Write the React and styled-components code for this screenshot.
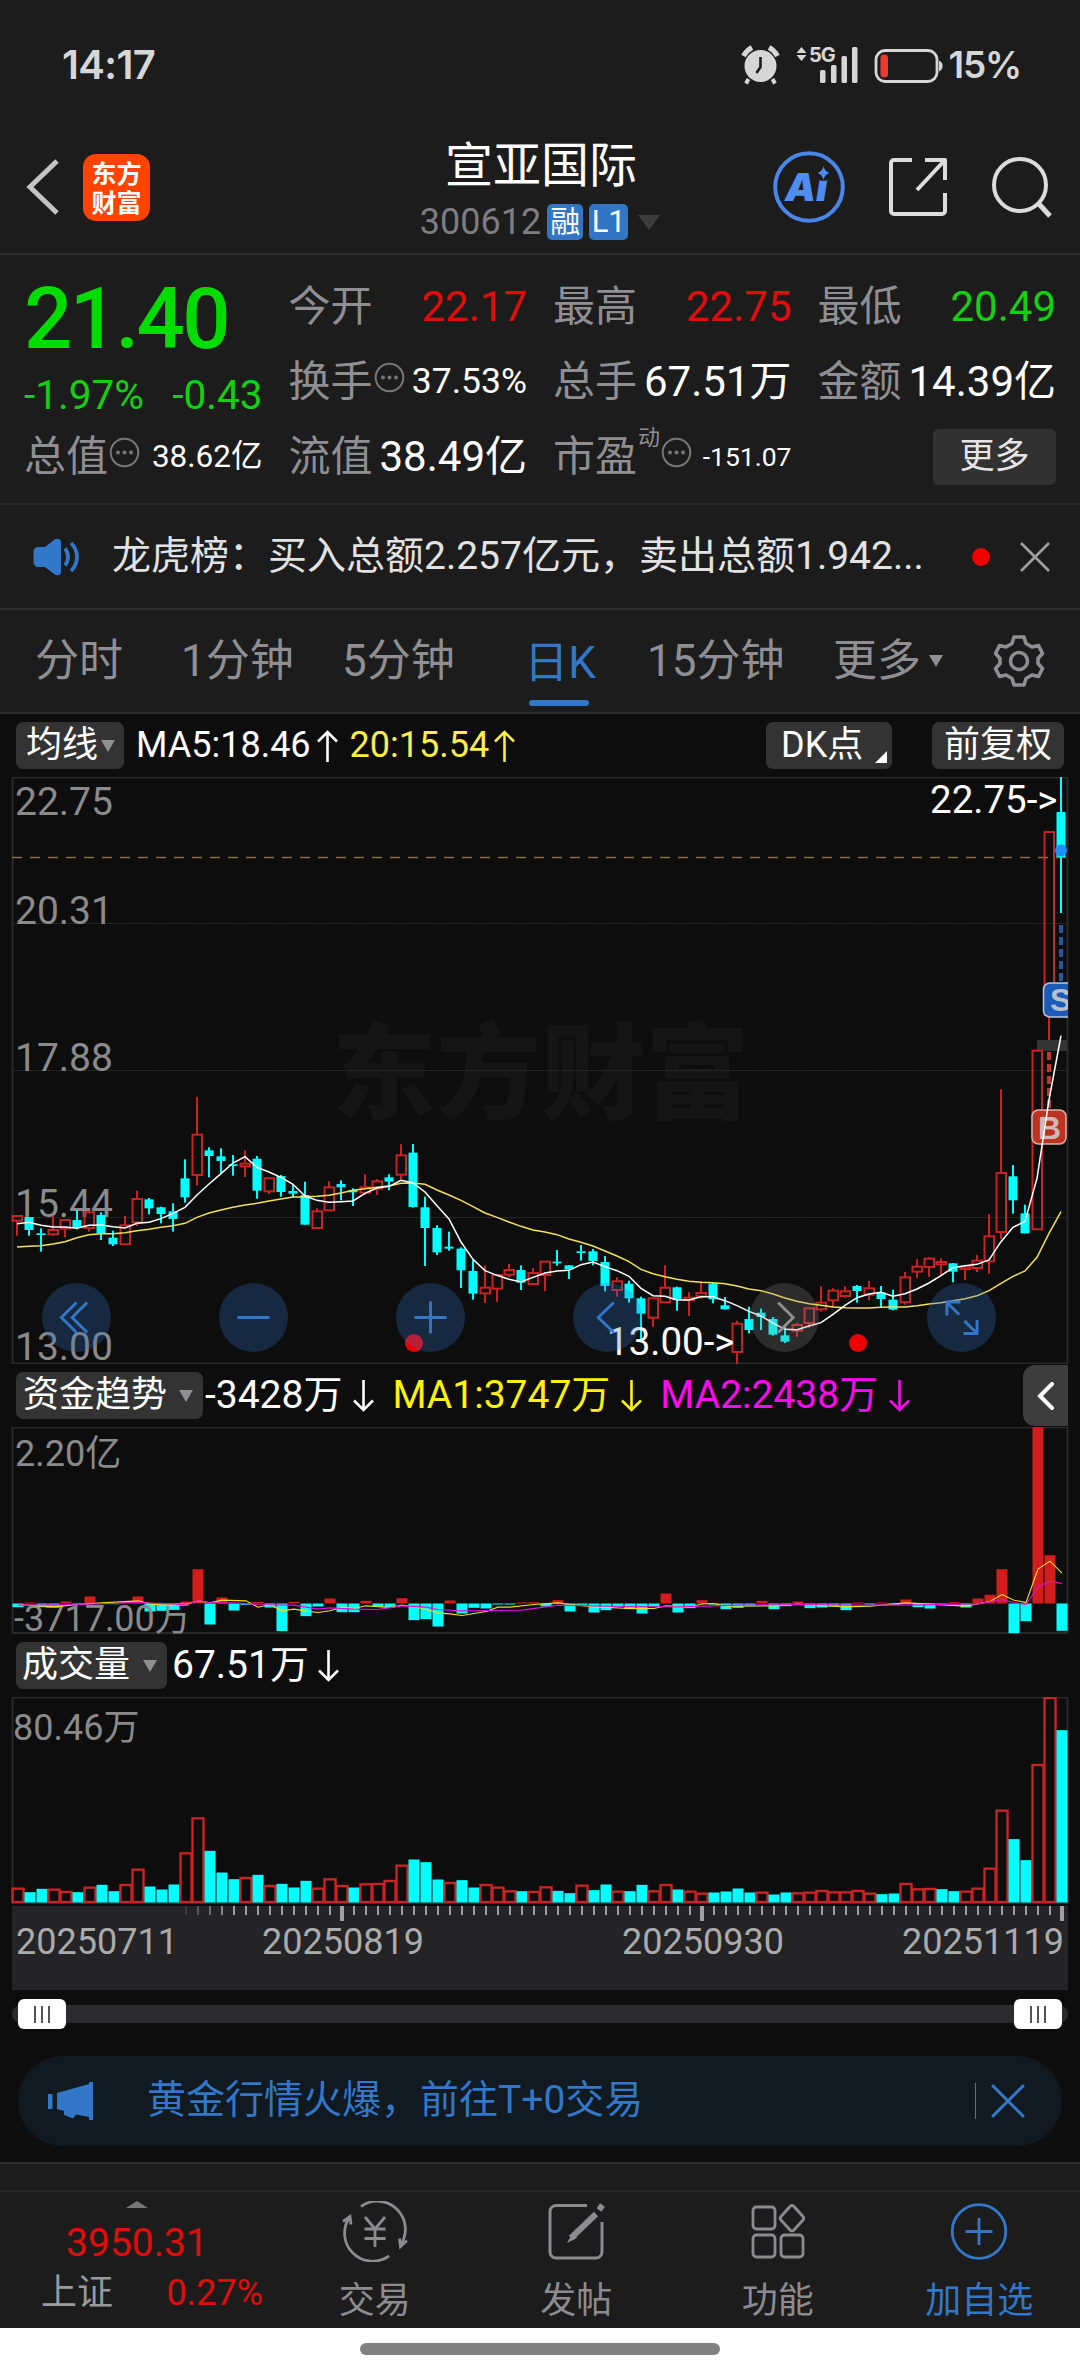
import React from "react"
import styled, { createGlobalStyle } from "styled-components"

const GlobalStyle = createGlobalStyle`
  * {
    box-sizing: border-box;
  }

  body {
    margin: 0;
    background: #0d0d0d;
    color: #fff;
    font-family: Roboto, "Noto Sans CJK SC", sans-serif;
    -webkit-font-smoothing: antialiased;
  }

  svg {
    display: block;
    flex: none;
  }
`

const clr = {
  bar: "#1c1c1c",
  line: "#2f2f2f",
  muted: "#8f8f93",
  blue: "#3277c8",
  red: "#e20c0c",
  green: "#14cf14",
  up: "#c62424",
  down: "#00ffff",
  frame: "#29292a",
}

const Page = styled.div`
  width: 1080px;
  height: 2376px;
  overflow: hidden;
  display: flex;
  flex-direction: column;
`

/* ---------- status bar ---------- */

const StatusBar = styled.div`
  display: flex;
  justify-content: space-between;
  height: 130px;
  padding: 0 59px 0 62px;
  background: ${clr.bar};
  color: #d6d6d6;
  font-family: Inter, Roboto, sans-serif;
  font-weight: 600;
  line-height: 130px;
`

const Clock = styled.span`
  font-size: 40px;
  letter-spacing: -0.6px;
`

const StatusIcons = styled.div`
  display: flex;
  align-items: center;
`

const Battery = styled.span`
  margin-left: 6px;
  font-size: 37px;
  letter-spacing: -1.2px;
`

/* ---------- header ---------- */

const Header = styled.header`
  display: grid;
  grid-template-columns: 340px 1fr 340px;
  height: 125px;
  background: ${clr.bar};
  border-bottom: 2px solid ${clr.line};
`

const HeaderLeft = styled.div`
  display: flex;
  align-items: center;
  gap: 24px;
  padding: 0 0 9px 26px;
`

const Logo = styled.div`
  width: 67px;
  height: 67px;
  padding-top: 4px;
  border-radius: 13px;
  background: #ff4400;
  font-family: "Noto Sans CJK SC", sans-serif;
  font-size: 25px;
  font-weight: 700;
  line-height: 29px;
  text-align: center;
`

const HeaderTitle = styled.div`
  display: flex;
  flex-direction: column;
  align-items: center;
`

const StockName = styled.div`
  height: 74px;
  padding-left: 2px;
  font-size: 48px;
  line-height: 72px;
`

const StockCode = styled.div`
  display: flex;
  align-items: center;
  height: 36px;
  color: #7d7d82;
  font-size: 36px;
`

const Tag = styled.span`
  width: ${p => p.$w}px;
  height: 36px;
  margin-left: 6px;
  border-radius: 5px;
  background: #3175c4;
  color: #fff;
  font-size: ${p => p.$size}px;
  line-height: 36px;
  text-align: center;
`

const HeaderRight = styled.div`
  display: flex;
  align-items: center;
  gap: 43px;
  padding: 0 0 9px 33px;
`

const Triangle = styled.span`
  flex: none;
  width: 0;
  height: 0;
  margin-left: ${p => p.$gap || 0}px;
  border: ${p => p.$w / 2}px solid transparent;
  border-top: ${p => p.$h}px solid ${p => p.$color || clr.muted};
  border-bottom: 0;
`

/* ---------- quote ---------- */

const Quote = styled.section`
  display: grid;
  grid-template-columns: repeat(4, 1fr);
  grid-template-rows: repeat(3, 75px);
  column-gap: 26px;
  height: 250px;
  padding: 14px 24px 0;
  background: ${clr.bar};
  border-bottom: 2px solid #282828;
`

const PriceBlock = styled.div`
  grid-row: span 2;
  color: ${clr.green};
`

const Price = styled.div`
  height: 97px;
  color: #00dc00;
  font-size: 85px;
  font-weight: 500;
  letter-spacing: -2.6px;
  line-height: 101px;
`

const Change = styled.div`
  display: flex;
  justify-content: space-between;
  font-size: 40.5px;
  line-height: 58px;
`

const Stat = styled.div`
  display: flex;
  align-items: center;
  justify-content: space-between;
  white-space: nowrap;
`

const StatLabel = styled.span`
  display: flex;
  align-items: center;
  gap: 1px;
  color: ${clr.muted};
  font-size: 42px;
  line-height: 75px;
`

const Sup = styled.sup`
  font-size: 22px;
  line-height: 22px;
  padding-bottom: 38px;
`

const StatValue = styled.span`
  color: ${p => p.$color || "#fff"};
  font-size: ${p => p.$size || 42}px;
  line-height: 75px;
`

const MoreButton = styled.button`
  justify-self: end;
  align-self: center;
  width: 123px;
  height: 56px;
  padding: 0;
  border: 0;
  border-radius: 6px;
  background: #323232;
  color: #e6e6e6;
  font: inherit;
  font-size: 35px;
  line-height: 54px;
`

/* ---------- news ---------- */

const News = styled.section`
  display: flex;
  align-items: center;
  height: 105px;
  padding: 0 30px 0 33px;
  background: ${clr.bar};
  border-bottom: 2px solid ${clr.line};
`

const NewsText = styled.span`
  flex: 1;
  margin-left: 31px;
  color: #e2e2e2;
  font-size: 39px;
  line-height: 101px;
  white-space: nowrap;
`

const Dot = styled.span`
  width: 18px;
  height: 18px;
  margin-right: 30px;
  border-radius: 50%;
  background: #f00000;
`

/* ---------- tabs ---------- */

const Tabs = styled.nav`
  display: flex;
  height: 104px;
  padding-left: 35px;
  background: ${clr.bar};
  border-bottom: 2px solid ${clr.line};
`

const Tab = styled.div`
  display: flex;
  align-items: center;
  flex: none;
  flex-direction: ${p => (p.$active ? "column" : "row")};
  width: ${p => p.$w}px;
  height: 102px;
  padding-left: ${p => p.$pad || 0}px;
  color: ${p => (p.$active ? clr.blue : clr.muted)};
  font-size: 44px;
  line-height: 107px;
  white-space: nowrap;
`

const ActiveLine = styled.span`
  flex: none;
  width: 60px;
  height: 6px;
  margin: -17px 2px 0 0;
  border-radius: 3px;
  background: ${clr.blue};
`

const Settings = styled.div`
  display: flex;
  align-items: center;
  margin-left: 1px;
`

/* ---------- charts ---------- */

const ChartHead = styled.div`
  display: flex;
  align-items: center;
  height: 63px;
  padding: 0 12px 0 16px;
  font-size: ${p => p.$size || 39}px;
  line-height: 63px;
  white-space: nowrap;
`

const Chip = styled.div`
  display: flex;
  align-items: center;
  width: ${p => p.$w}px;
  height: 47px;
  margin: 0 ${p => p.$mr || 0}px 0 ${p => p.$ml || 0}px;
  padding-left: ${p => p.$pad}px;
  border-radius: 7px;
  background: #333;
  font-size: 36px;
  line-height: 47px;
`

const Spacer = styled.span`
  flex: 1;
`

const Corner = styled.span`
  align-self: flex-end;
  width: 0;
  height: 0;
  margin: 0 0 6px 12px;
  border-left: 12px solid transparent;
  border-bottom: 12px solid #fff;
`

const Reading = styled.span`
  display: flex;
  align-items: center;
  margin-left: ${p => p.$ml}px;
  color: ${p => p.$color || "#fff"};

  svg {
    margin-left: ${p => p.$gap || 11}px;
  }
`

const Collapse = styled.div`
  display: flex;
  align-items: center;
  justify-content: center;
  align-self: flex-start;
  width: 45px;
  height: 61px;
  margin-top: 1px;
  border-radius: 12px 0 0 12px;
  background: #3d3d3d;
`

const ChartArea = styled.div`
  position: relative;
  height: 587px;
`

const Controls = styled.div`
  position: absolute;
  left: 42px;
  bottom: 12px;
  display: flex;
  gap: 108px;
`

const RoundButton = styled.div`
  display: flex;
  width: 69px;
  height: 69px;
  border-radius: 50%;
  background: ${p => (p.$off ? "rgba(140, 140, 140, 0.25)" : "rgba(47, 114, 196, 0.28)")};
  color: ${p => (p.$off ? "#8f8f8f" : clr.blue)};
`

const Range = styled.div`
  display: flex;
  align-items: center;
  justify-content: space-between;
  height: 18px;
  margin: 15px 12px 33px;
  padding: 0 6px;
  border-radius: 9px;
  background: #2b2b2d;
`

const Thumb = styled.span`
  display: flex;
  align-items: center;
  justify-content: center;
  gap: 5px;
  width: 48px;
  height: 30px;
  border-radius: 6px;
  background: #fff;

  i {
    width: 2px;
    height: 17px;
    background: #555;
  }
`

const Banner = styled.section`
  display: flex;
  align-items: center;
  height: 90px;
  margin: 0 18px;
  padding: 0 37px 0 30px;
  border-radius: 45px;
  background: #111921;
  color: ${clr.blue};
  font-size: 39px;
  line-height: 88px;
`

const BannerText = styled.span`
  flex: 1;
  height: 90px;
  margin-left: 53px;
`

const BannerRule = styled.span`
  width: 1px;
  height: 36px;
  margin-right: 15px;
  background: ${clr.blue};
`

/* ---------- bottom bar ---------- */

const Strip = styled.div`
  height: 30px;
  margin-top: 16px;
  background: ${clr.bar};
  border-top: 2px solid ${clr.line};
  border-bottom: 2px solid #262626;
`

const BottomBar = styled.nav`
  display: flex;
  height: 136px;
  background: ${clr.bar};
`

const IndexPanel = styled.div`
  width: 274px;
  display: flex;
  flex-direction: column;
  align-items: center;
  color: ${clr.red};
`

const IndexValue = styled.div`
  font-size: 39px;
  line-height: 50px;
  margin-top: 10px;
`

const IndexRow = styled.div`
  display: flex;
  align-self: stretch;
  justify-content: space-between;
  padding: 0 11px 0 41px;
  font-size: 36px;
  line-height: 51px;

  span:first-child {
    color: #9a9a9e;
  }
`

const NavItem = styled.div`
  display: flex;
  flex-direction: column;
  align-items: center;
  width: 201.5px;
  padding-top: 9px;
  color: ${p => (p.$active ? clr.blue : "#8c8c90")};
  font-size: 36px;
  line-height: 54px;

  svg {
    margin-bottom: 12px;
  }
`

const HomeArea = styled.div`
  display: flex;
  justify-content: center;
  flex: 1;
  padding-top: 15px;
  background: #fff;
`

const HomePill = styled.span`
  width: 360px;
  height: 12px;
  border-radius: 6px;
  background: #808080;
`

/* ---------- data ---------- */

const STEP = 12

// high, body top, body bottom, low in thirds of a pixel below the 17.88 line
const candles = [
  ["r", 435, 438, 452, 497], ["c", 441, 441, 480, 497], ["c", 475, 490, 495, 545], ["r", 437, 480, 493, 497],
  ["r", 447, 450, 476, 502], ["c", 420, 450, 472, 478], ["r", 425, 427, 474, 485], ["c", 427, 435, 490, 510],
  ["c", 482, 503, 523, 528], ["r", 437, 466, 523, 523], ["r", 362, 387, 457, 468], ["c", 384, 388, 415, 433],
  ["c", 410, 412, 432, 460], ["c", 400, 424, 447, 485], ["c", 268, 325, 382, 398], ["r", 80, 194, 315, 347],
  ["c", 232, 241, 258, 322], ["c", 235, 259, 273, 310], ["c", 255, 283, 288, 317], ["r", 241, 281, 289, 321],
  ["c", 258, 266, 362, 386], ["r", 325, 325, 364, 372], ["c", 315, 318, 366, 380], ["c", 345, 363, 371, 384],
  ["c", 335, 375, 464, 464], ["r", 415, 424, 474, 474], ["r", 334, 352, 421, 421], ["c", 331, 342, 352, 391],
  ["c", 355, 360, 367, 408], ["r", 313, 352, 368, 375], ["r", 327, 334, 356, 375], ["c", 313, 322, 335, 361],
  ["r", 223, 256, 314, 328], ["c", 222, 248, 411, 413], ["c", 380, 412, 474, 588], ["c", 466, 474, 547, 555],
  ["c", 485, 530, 536, 542], ["c", 532, 536, 601, 654], ["c", 570, 603, 671, 689], ["r", 586, 653, 670, 699],
  ["r", 615, 615, 656, 695], ["r", 582, 600, 614, 622], ["c", 586, 600, 638, 660], ["r", 594, 609, 642, 642],
  ["r", 575, 575, 615, 664], ["c", 540, 575, 580, 587], ["c", 585, 586, 598, 627], ["c", 525, 544, 549, 572],
  ["c", 537, 544, 573, 586], ["c", 558, 576, 648, 664], ["r", 622, 634, 660, 680], ["c", 632, 641, 685, 698],
  ["c", 680, 685, 731, 810], ["r", 685, 685, 743, 770], ["r", 586, 653, 697, 697], ["c", 650, 652, 690, 722],
  ["r", 667, 683, 690, 738], ["r", 634, 669, 679, 686], ["c", 637, 641, 688, 700], ["c", 681, 706, 718, 718],
  ["r", 752, 761, 846, 882], ["c", 710, 747, 780, 790], ["c", 716, 728, 741, 780], ["c", 741, 747, 794, 797],
  ["c", 762, 796, 815, 819], ["r", 758, 765, 782, 800], ["r", 715, 715, 759, 773], ["r", 649, 698, 718, 725],
  ["r", 655, 662, 691, 712], ["r", 649, 664, 678, 683], ["c", 645, 648, 663, 698], ["r", 633, 655, 674, 691],
  ["c", 648, 667, 687, 712], ["c", 659, 689, 719, 721], ["r", 606, 622, 697, 704], ["r", 568, 590, 605, 623],
  ["r", 561, 566, 591, 620], ["r", 565, 576, 583, 615], ["c", 579, 580, 605, 637], ["r", 590, 590, 597, 630],
  ["r", 555, 572, 594, 606], ["r", 432, 499, 574, 611], ["r", 58, 309, 486, 508], ["c", 285, 319, 391, 431],
  ["c", 404, 430, 490, 490], ["r", -58, -58, 478, 478], ["r", -714, -714, -165, -90], ["c", -879, -774, -639, -471],
]

const ma5 = [
  461, 457, 466, 471, 471, 475, 466, 465, 470, 474, 460, 457, 446, 430, 412, 375, 342, 311, 279, 260, 292, 306,
  322, 343, 378, 391, 397, 395, 393, 370, 354, 349, 331, 339, 366, 407, 447, 516, 568, 602, 616, 628, 636, 622,
  609, 603, 601, 584, 576, 590, 602, 619, 655, 677, 679, 690, 690, 680, 680, 692, 707, 724, 738, 759, 778, 779,
  768, 758, 733, 706, 683, 672, 667, 679, 671, 657, 639, 617, 593, 587, 583, 570, 515, 472, 454, 325, 90, -103,
]

const ma20 = [
  531, 529, 527, 522, 515, 503, 494, 491, 491, 488, 482, 478, 472, 467, 460, 442, 429, 420, 412, 405, 400, 393,
  387, 381, 381, 379, 376, 369, 361, 356, 352, 348, 340, 339, 343, 360, 375, 391, 410, 429, 442, 456, 469, 480,
  486, 494, 507, 517, 528, 543, 558, 575, 598, 611, 620, 628, 634, 637, 638, 641, 648, 657, 662, 672, 684, 694,
  701, 706, 711, 713, 714, 714, 712, 711, 711, 707, 702, 698, 692, 686, 677, 662, 640, 619, 603, 562, 490, 425,
]

const flows = [
  -11, 3, -11, -9, 6, -4, 21, -2, -2, 5, 21, -24, -22, -19, 6, 103, -63, 18, -21, -4, 5, -12, -83, 5, -38, -9, 15,
  -26, -26, 8, -10, -12, 16, -50, -47, -69, 9, -30, -13, -15, -3, -3, 3, 4, -9, 10, -24, -4, -27, -20, -10, -17,
  -30, -9, 30, -27, -14, 10, -3, -17, -13, -8, 8, -17, -8, 6, -14, -12, -9, -20, 3, -3, 3, -5, 12, -11, -15, -4,
  4, -12, 15, 26, 103, -89, -53, 529, 145, -82,
]

const flowMa1 = [
  [0, 3], [3, 10], [5, 3], [7, -2], [10, -8], [11, 1], [12, 5], [13, 5], [14, 3], [15, -8], [16, -2], [17, -10],
  [19, -8], [20, 11], [21, 3], [22, 22], [23, 17], [24, 23], [25, 27], [26, 22], [27, 11], [28, 15], [29, 7],
  [31, 12], [32, 5], [33, 10], [34, 18], [35, 28], [36, 31], [37, 36], [39, 24], [40, 11], [41, 11], [43, 3],
  [45, -2], [46, 3], [48, 10], [51, 15], [53, 15], [54, 7], [56, 11], [57, 1], [58, 0], [59, 8], [63, 7], [65, 2],
  [69, 10], [71, 8], [74, -2], [76, 2], [79, 8], [81, -6], [82, -27], [83, -10], [84, -3], [85, -103], [86, -127],
  [87, -91],
]

const flowMa2 = [
  [0, 5], [5, 3], [10, -3], [13, 1], [14, 5], [15, -9], [16, -2], [18, -2], [20, 3], [23, 5], [25, 17], [26, 13],
  [28, 17], [30, 18], [32, 7], [34, 11], [35, 18], [37, 22], [42, 20], [45, 5], [50, 9], [55, 10], [60, 5],
  [65, 3], [70, 5], [75, 4], [80, 1], [82, -12], [83, -3], [84, 3], [85, -50], [86, -67], [87, -60],
]

const volumes = [
  ["r", 43], ["c", 31], ["c", 41], ["r", 40], ["r", 33], ["c", 31], ["r", 46], ["c", 53], ["c", 34], ["r", 54],
  ["r", 100], ["c", 48], ["c", 39], ["c", 54], ["r", 149], ["r", 254], ["c", 155], ["c", 90], ["c", 70],
  ["r", 75], ["c", 83], ["r", 51], ["c", 56], ["c", 45], ["c", 65], ["r", 43], ["r", 71], ["r", 51], ["c", 45],
  ["r", 56], ["r", 57], ["r", 66], ["r", 112], ["c", 129], ["c", 121], ["c", 69], ["r", 60], ["c", 67],
  ["c", 45], ["r", 54], ["r", 46], ["r", 35], ["c", 34], ["r", 33], ["r", 47], ["c", 35], ["c", 28], ["r", 52],
  ["c", 37], ["c", 54], ["r", 34], ["c", 34], ["c", 53], ["r", 35], ["r", 54], ["c", 39], ["r", 34], ["r", 28],
  ["c", 30], ["c", 33], ["c", 42], ["c", 30], ["r", 31], ["c", 24], ["c", 30], ["r", 29], ["r", 31], ["r", 36],
  ["r", 32], ["r", 32], ["r", 36], ["r", 28], ["c", 25], ["c", 27], ["r", 57], ["r", 41], ["r", 42], ["c", 40],
  ["c", 34], ["r", 34], ["r", 43], ["r", 103], ["r", 277], ["c", 190], ["c", 127], ["r", 414], ["r", 615],
  ["c", 517],
]

const line = (values, base) => values.map((v, i) => `${17 + i * STEP},${base + v / 3}`).join(" ")
const sparse = (points, base) => points.map(([i, v]) => `${18 + i * STEP},${base + v / 3}`).join(" ")

/* ---------- icons ---------- */

const Arrow = ({ down }) => (
  <svg width="21" height="32" viewBox="0 0 21 32" fill="none" stroke="currentColor" strokeWidth="2.6">
    <path d={down ? "M10.5 0v30M1 20.5l9.5 9.5 9.5-9.5" : "M10.5 32V2M1 11.5L10.5 2l9.5 9.5"} />
  </svg>
)

const InfoSvg = styled.svg`
  margin-top: -8px;
`

const Info = () => (
  <InfoSvg width="31" height="31" viewBox="0 0 31 31" fill="#77777a">
    <circle cx="15.5" cy="15.5" r="13.8" fill="none" stroke="#77777a" strokeWidth="2" />
    <circle cx="9" cy="15.5" r="2" />
    <circle cx="15.5" cy="15.5" r="2" />
    <circle cx="22" cy="15.5" r="2" />
  </InfoSvg>
)

const Cross = ({ size, color }) => (
  <svg width={size} height={size} viewBox="0 0 30 30" stroke={color} strokeWidth="2.6">
    <path d="M1 1l28 28M29 1L1 29" />
  </svg>
)

const StatusGlyphs = () => (
  <svg width="202" height="40" viewBox="741 45 202 40" fill="#d6d6d6">
    <circle cx="760.5" cy="66" r="16" />
    <path d="M748.5 79l-2.5 4.5M772.5 79l2.5 4.5" stroke="#d6d6d6" strokeWidth="4" />
    <path d="M743.5 56a21 21 0 0 1 8.5-8.5M777.5 56a21 21 0 0 0-8.5-8.5" stroke="#d6d6d6" strokeWidth="5" fill="none" />
    <path d="M760.5 57v10l-4 6" stroke="#1c1c1c" strokeWidth="2.6" fill="none" />
    <path d="M801.5 47l5 6h-10zM801.5 61l5-6h-10z" />
    <text x="809" y="62" fontSize="20" fontWeight="700" letterSpacing="-1">5G</text>
    <rect x="820" y="70" width="5.5" height="13" rx="1.5" />
    <rect x="831" y="65" width="5.5" height="18" rx="1.5" />
    <rect x="841.5" y="56" width="5.5" height="27" rx="1.5" />
    <rect x="852" y="47" width="5.5" height="36" rx="1.5" />
    <rect x="876" y="50.5" width="61" height="31" rx="9" fill="none" stroke="#d6d6d6" strokeWidth="2.8" />
    <path d="M939 60.5a6 6 0 0 1 0 11z" />
    <rect x="880.5" y="54.5" width="7.5" height="23" rx="3.5" fill="#ee3a2c" />
  </svg>
)

const BackIcon = () => (
  <svg width="33" height="56" viewBox="0 0 33 56" fill="none" stroke="#c4c4c4" strokeWidth="5">
    <path d="M31 2L4 28l27 26" />
  </svg>
)

const AiIcon = () => (
  <svg width="72" height="74" viewBox="0 0 72 74" fill="#4f8df0">
    <circle cx="36" cy="37" r="33.8" fill="none" stroke="#4a86ea" strokeWidth="4" />
    <text x="12" y="50.5" fontFamily="Inter, sans-serif" fontSize="39" fontWeight="900" fontStyle="italic">Ai</text>
    <path
      d="M50.5 16c1 4 2.500 5.500 6 7-3.500 1.500-5 3-6 7-1-4-2.500-5.500-6-7 3.500-1.500 5-3 6-7z"
      stroke="#1c1c1c"
      strokeWidth="6"
      paintOrder="stroke"
    />
  </svg>
)

const ShareIcon = () => (
  <svg width="60" height="60" viewBox="0 0 60 60" fill="none" stroke="#dcdcdc" strokeWidth="4" strokeLinejoin="round">
    <path d="M24 3H6a3 3 0 0 0-3 3v48a3 3 0 0 0 3 3h48a3 3 0 0 0 3-3V36" />
    <path d="M37 3h20v20M57 3L29 33" />
  </svg>
)

const SearchIcon = () => (
  <svg width="62" height="62" viewBox="0 0 62 62" fill="none" stroke="#dcdcdc" strokeWidth="4">
    <circle cx="29" cy="29" r="26" />
    <path d="M47.5 47.5L59 60" strokeWidth="5" />
  </svg>
)

const SpeakerIcon = () => (
  <svg width="48" height="38" viewBox="0 0 48 38" fill="#3277c8">
    <path d="M6 9h6L21 2c3.500-2.500 7-1.500 7 2.500v29c0 4-3.500 5-7 2.500L12 29H6c-3.500 0-5.500-2-5.500-5.500v-9C.5 11 2.500 9 6 9z" />
    <path d="M32 10.500c4 5 4 12 0 17M38 5c8 8 8 20 0 28" fill="none" stroke="#3277c8" strokeWidth="3.8" />
  </svg>
)

const GearIcon = () => (
  <svg width="52" height="54" viewBox="-26 -27 52 54" fill="none" stroke={clr.muted} strokeWidth="3.6" strokeLinejoin="round">
    <path d="M-5-24h10l2 6.5 6 3.5 6.5-1.5 4 8-4.5 5v5l4.5 5-4 8-6.500-1.500-6 3.500-2 6.500h-10l-2-6.500-6-3.500-6.500 1.500-4-8 4.500-5v-5l-4.500-5 4-8 6.500 1.500 6-3.500z" />
    <circle r="8.5" />
  </svg>
)

const HornIcon = () => (
  <svg width="46" height="40" viewBox="0 0 46 40" fill="#3277c8">
    <rect x="0" y="13" width="4.5" height="15" />
    <path d="M9 12L41 3V1h4v38h-4v-3l-13-2.5-3 4-9-3.5v-4L9 28z" />
  </svg>
)

const TradeIcon = () => (
  <svg width="66" height="61" viewBox="0 0 66 61" fill="none" stroke="currentColor" strokeWidth="2.8">
    <path d="M19 5.5A28 28 0 0 1 58.500 44M47 55A28 28 0 0 1 7.5 16.5" />
    <path d="M65 39.5l-6.500 6-1-8M1 20.5l7-5 1 8" />
    <path d="M23 16l10 12 10-12M22.5 28h21M22.5 37.5h21M33 28v18" />
  </svg>
)

const PostIcon = () => (
  <svg width="58" height="61" viewBox="0 0 58 61" fill="none" stroke="currentColor" strokeWidth="3">
    <path d="M40 4.5H9a6 6 0 0 0-6 6V51a6 6 0 0 0 6 6h40a6 6 0 0 0 6-6V21" />
    <path d="M55.5 4L52 9M49 13L24 37" strokeWidth="6" />
    <path d="M26 31l-6 11 10-5z" fill="currentColor" stroke="none" />
  </svg>
)

const GridIcon = () => (
  <svg width="54" height="61" viewBox="0 0 54 61" fill="none" stroke="currentColor" strokeWidth="2.8">
    <rect x="2" y="6" width="22" height="22" rx="3.5" />
    <rect x="2" y="34" width="22" height="22" rx="3.5" />
    <rect x="30" y="34" width="22" height="22" rx="3.5" />
    <path d="M39 5.500a2.500 2.500 0 0 1 4 0l9 10a2.500 2.500 0 0 1 0 3.500l-9 10a2.500 2.500 0 0 1-4 0l-9-10a2.500 2.500 0 0 1 0-3.500z" />
  </svg>
)

const AddIcon = () => (
  <svg width="60" height="61" viewBox="0 0 60 61" fill="none" stroke="currentColor" strokeWidth="2.8">
    <circle cx="30" cy="30.5" r="26.8" />
    <path d="M30 17v27M16.5 30.5h27" />
  </svg>
)

const controls = [
  "M34.5 20L19 35.500 34.500 51M45.500 20L30 35.500 45.500 51",
  "M18 35.5h33",
  "M18 35.5h33M34.5 19v33",
  "M41 20L25 35.5 41 51",
  "M28 20l15.5 15.5L28 51",
  "M32 32.5L19.5 20M19.5 33.500V19.500h14M37.500 39L50 51.500M36.500 52h14V38",
]

/* ---------- chart drawings ---------- */

const Candle = ({ data, i }) => {
  const [kind, high, top, bottom, low] = data
  const y = v => 293 + v / 3
  const x = 17 + i * STEP
  const h = (bottom - top) / 3
  if (kind === "c") {
    return (
      <g fill={clr.down}>
        <rect x={x - 1} y={y(high)} width="2" height={(low - high) / 3} />
        <rect x={x - 4.5} y={y(top)} width="9" height={Math.max(h, 1.5)} />
      </g>
    )
  }
  return (
    <g stroke={clr.up} strokeWidth="2" fill="none">
      <path d={`M${x} ${y(high)}V${y(top)}M${x} ${y(bottom)}V${y(low)}`} />
      <rect x={x - 4.5} y={y(top)} width="9.5" height={h} />
    </g>
  )
}

const PriceChart = () => (
  <svg width="1080" height="587" viewBox="0 0 1080 587">
    <text x="332" y="334" fontSize="104" fontWeight="900" letterSpacing="0.5" fill="#151515">东方财富</text>
    <rect x="12.5" y="0.5" width="1055" height="586" fill="none" stroke={clr.frame} strokeWidth="2" />
    {[146.5, 293.5, 440.5].map(y => (
      <path key={y} d={`M13 ${y}H1067`} stroke="#333" strokeDasharray="1.5 1" />
    ))}
    <path d="M12 80.5H1067" stroke="#8c6c4a" strokeWidth="1.6" strokeDasharray="10 8" />
    <g fontSize="39" fill="#8a8a8a">
      <text x="15" y="38">22.75</text>
      <text x="15" y="147">20.31</text>
      <text x="15" y="294">17.88</text>
      <text x="15" y="440">15.44</text>
      <text x="15" y="583">13.00</text>
    </g>
    <rect x="1037" y="263" width="30" height="11" fill="#333" />
    {candles.map((c, i) => (
      <Candle key={i} data={c} i={i} />
    ))}
    <polyline points={line(ma20, 293)} fill="none" stroke="#f0e05a" strokeWidth="1.5" />
    <path d="M1061 148v56" stroke="#2059a8" strokeWidth="4" strokeDasharray="8 4" />
    <path d="M1049 275v57" stroke="#c0392b" strokeWidth="4" strokeDasharray="8 4" />
    <g fontFamily="Liberation Sans" fontWeight="700" fontSize="32" strokeWidth="1.5">
      <path d="M1068 206h-18a6.5 6.5 0 0 0-6.5 6.5v21a6.5 6.5 0 0 0 6.5 6.5h18" fill="#1c5cb8" stroke="#b9c6dc" />
      <svg x="1043" y="205" width="25" height="36">
        <text x="7" y="29" fill="#b9c0cc" stroke="none">S</text>
      </svg>
      <rect x="1032" y="333" width="34" height="34" rx="6.5" fill="#bd3322" stroke="#d8b0aa" />
      <text x="1038" y="361.5" fill="#cdbab8">B</text>
    </g>
    <polyline points={line(ma5, 293)} fill="none" stroke="#fff" strokeWidth="1.5" />
    <circle cx="1061" cy="73.5" r="6" fill="#1e90ff" />
    <circle cx="414" cy="566" r="9" fill="#ec0000" />
    <circle cx="858" cy="566" r="9" fill="#ec0000" />
    <g fontSize="38.5" fill="#fff">
      <text x="930" y="35.5">22.75-&gt;</text>
      <text x="607" y="578">13.00-&gt;</text>
    </g>
  </svg>
)

const FlowChart = () => (
  <svg width="1080" height="207" viewBox="0 0 1080 207">
    <rect x="12.5" y="0.5" width="1055" height="205.5" fill="none" stroke={clr.frame} strokeWidth="2" />
    {flows.map((v, i) => (
      <rect
        key={i}
        x={12.5 + i * STEP}
        y={v > 0 ? 176.5 - v / 3 : 176.5}
        width="11"
        height={Math.abs(v) / 3}
        fill={v > 0 ? "#d31d1d" : clr.down}
      />
    ))}
    <g fontSize="36" fill="#8a8a8a">
      <text x="15" y="39">2.20亿</text>
      <text x="14" y="203.5">-3717.00万</text>
    </g>
    <polyline points={sparse(flowMa1, 176.5)} fill="none" stroke="#f0e020" strokeWidth="1.1" />
    <polyline points={sparse(flowMa2, 176.5)} fill="none" stroke="#e010e0" strokeWidth="1.1" />
  </svg>
)

const VolumeChart = () => (
  <svg width="1080" height="209" viewBox="0 0 1080 209">
    <rect x="12.5" y="0.5" width="1055" height="205.5" fill="none" stroke={clr.frame} strokeWidth="2" />
    <text x="13" y="43" fontSize="36" fill="#8a8a8a">80.46万</text>
    {volumes.map(([kind, v], i) =>
      kind === "c" ? (
        <rect key={i} x={12.5 + i * STEP} y={205.5 - v / 3} width="11" height={v / 3} fill={clr.down} />
      ) : (
        <rect
          key={i}
          x={12.5 + i * STEP}
          y={206 - v / 3}
          width="11"
          height={v / 3 - 1}
          fill="none"
          stroke={clr.up}
          strokeWidth="2.4"
        />
      )
    )}
  </svg>
)

const ticks = Array.from({ length: 74 }, (_, i) => 186 + i * STEP)
const majors = [342, 702, 1062]

const TimeAxis = () => (
  <svg width="1080" height="84" viewBox="0 0 1080 84">
    <rect x="12" width="1056" height="84" fill="#242426" />
    {ticks.map((x, i) => (
      <rect
        key={x}
        x={majors.includes(x) ? x - 2 : x - 1}
        width={majors.includes(x) ? 4 : 2}
        height={majors.includes(x) ? 15 : 9}
        fill="#a0a0a0"
        opacity={Math.min(1, 0.2 + i * 0.2)}
      />
    ))}
    <g fontSize="36" fill="#ababab">
      <text x="16" y="48">20250711</text>
      <text x="262" y="48">20250819</text>
      <text x="622" y="48">20250930</text>
      <text x="902" y="48">20251119</text>
    </g>
  </svg>
)

export default function App() {
  return (
    <Page>
      <GlobalStyle />
      <StatusBar>
        <Clock>14:17</Clock>
        <StatusIcons>
          <StatusGlyphs />
          <Battery>15%</Battery>
        </StatusIcons>
      </StatusBar>

      <Header>
        <HeaderLeft>
          <BackIcon />
          <Logo>
            <div>东方</div>
            <div>财富</div>
          </Logo>
        </HeaderLeft>
        <HeaderTitle>
          <StockName>宣亚国际</StockName>
          <StockCode>
            300612
            <Tag $w={36} $size={30}>融</Tag>
            <Tag $w={39} $size={31}>L1</Tag>
            <Triangle $w={22} $h={15} $gap={10} $color="#3c3c3c" />
          </StockCode>
        </HeaderTitle>
        <HeaderRight>
          <AiIcon />
          <ShareIcon />
          <SearchIcon />
        </HeaderRight>
      </Header>

      <Quote>
        <PriceBlock>
          <Price>21.40</Price>
          <Change>
            <span>-1.97%</span>
            <span>-0.43</span>
          </Change>
        </PriceBlock>
        <Stat>
          <StatLabel>今开</StatLabel>
          <StatValue $color={clr.red}>22.17</StatValue>
        </Stat>
        <Stat>
          <StatLabel>最高</StatLabel>
          <StatValue $color={clr.red}>22.75</StatValue>
        </Stat>
        <Stat>
          <StatLabel>最低</StatLabel>
          <StatValue $color={clr.green}>20.49</StatValue>
        </Stat>
        <Stat>
          <StatLabel>换手<Info /></StatLabel>
          <StatValue $size={35.5}>37.53%</StatValue>
        </Stat>
        <Stat>
          <StatLabel>总手</StatLabel>
          <StatValue>67.51万</StatValue>
        </Stat>
        <Stat>
          <StatLabel>金额</StatLabel>
          <StatValue>14.39亿</StatValue>
        </Stat>
        <Stat>
          <StatLabel>总值<Info /></StatLabel>
          <StatValue $size={31.5}>38.62亿</StatValue>
        </Stat>
        <Stat>
          <StatLabel>流值</StatLabel>
          <StatValue>38.49亿</StatValue>
        </Stat>
        <Stat>
          <StatLabel>市盈<Sup>动</Sup><Info /></StatLabel>
          <StatValue $size={26.5}>-151.07</StatValue>
        </Stat>
        <MoreButton>更多</MoreButton>
      </Quote>

      <News>
        <SpeakerIcon />
        <NewsText>龙虎榜：买入总额2.257亿元，卖出总额1.942...</NewsText>
        <Dot />
        <Cross size={30} color="#a0a0a0" />
      </News>

      <Tabs>
        <Tab $w={146}>分时</Tab>
        <Tab $w={161}>1分钟</Tab>
        <Tab $w={151}>5分钟</Tab>
        <Tab $w={134} $active>
          日K
          <ActiveLine />
        </Tab>
        <Tab $w={206} $pad={20}>15分钟</Tab>
        <Tab $w={159}>
          更多
          <Triangle $w={15} $h={12} $gap={8} />
        </Tab>
        <Settings>
          <GearIcon />
        </Settings>
      </Tabs>

      <ChartHead $size={36}>
        <Chip $w={108} $pad={10}>
          均线
          <Triangle $w={15} $h={12} $gap={3} />
        </Chip>
        <Reading $ml={12} $gap={6}>MA5:18.46<Arrow /></Reading>
        <Reading $ml={12} $gap={5} $color="#fbec50">20:15.54<Arrow /></Reading>
        <Spacer />
        <Chip $w={126} $pad={15}>
          DK点
          <Corner />
        </Chip>
        <Chip $w={132} $pad={12} $ml={40} $mr={4}>前复权</Chip>
      </ChartHead>
      <ChartArea>
        <PriceChart />
        <Controls>
          {controls.map((d, i) => (
            <RoundButton key={d} $off={i === 4}>
              <svg width="69" height="69" viewBox="0 0 69 71" fill="none" stroke="currentColor" strokeWidth="3">
                <path d={d} />
              </svg>
            </RoundButton>
          ))}
        </Controls>
      </ChartArea>

      <ChartHead>
        <Chip $w={187} $pad={7}>
          资金趋势
          <Triangle $w={15} $h={12} $gap={12} />
        </Chip>
        <Reading $ml={2}>-3428万<Arrow down /></Reading>
        <Reading $ml={18} $color="#fff010">MA1:3747万<Arrow down /></Reading>
        <Reading $ml={18} $color="#fb0bec">MA2:2438万<Arrow down /></Reading>
        <Spacer />
        <Collapse>
          <svg width="18" height="28" viewBox="0 0 18 28" fill="none" stroke="#fff" strokeWidth="4" strokeLinecap="round">
            <path d="M15 2L3 14l12 12" />
          </svg>
        </Collapse>
      </ChartHead>
      <FlowChart />

      <ChartHead>
        <Chip $w={151} $pad={6}>
          成交量
          <Triangle $w={15} $h={12} $gap={13} />
        </Chip>
        <Reading $ml={5} $gap={9}>67.51万<Arrow down /></Reading>
      </ChartHead>
      <VolumeChart />
      <TimeAxis />

      <Range>
        <Thumb><i /><i /><i /></Thumb>
        <Thumb><i /><i /><i /></Thumb>
      </Range>

      <Banner>
        <HornIcon />
        <BannerText>黄金行情火爆，前往T+0交易</BannerText>
        <BannerRule />
        <Cross size={34} color={clr.blue} />
      </Banner>

      <Strip />
      <BottomBar>
        <IndexPanel>
          <svg width="22" height="16" viewBox="0 0 22 16">
            <path d="M0 16L11 9l11 7z" fill="#777" />
          </svg>
          <IndexValue>3950.31</IndexValue>
          <IndexRow>
            <span>上证</span>
            <span>0.27%</span>
          </IndexRow>
        </IndexPanel>
        <NavItem><TradeIcon />交易</NavItem>
        <NavItem><PostIcon />发帖</NavItem>
        <NavItem><GridIcon />功能</NavItem>
        <NavItem $active><AddIcon />加自选</NavItem>
      </BottomBar>
      <HomeArea>
        <HomePill />
      </HomeArea>
    </Page>
  )
}
